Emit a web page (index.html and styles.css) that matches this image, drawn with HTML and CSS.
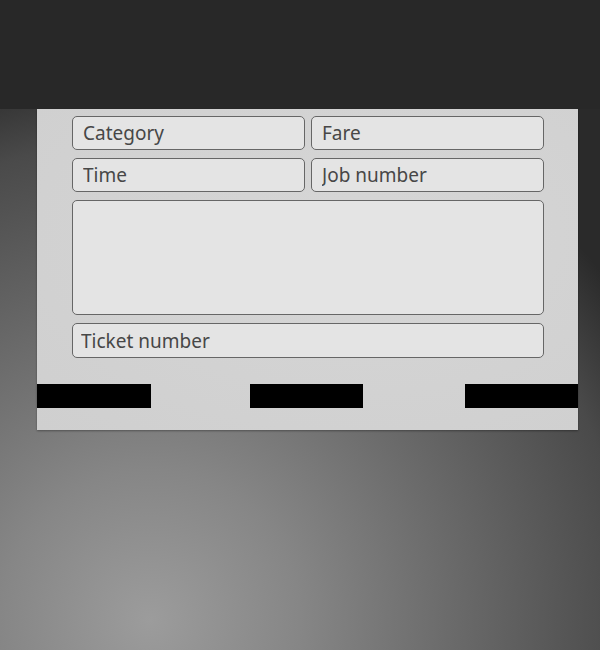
FILE: index.html
```html
<!doctype html>
<html lang="en">
  <head>
    <meta charset="UTF-8" />
    <meta name="viewport" content="width=device-width, initial-scale=1.0" />
    <title>Ticket</title>
    <link rel="stylesheet" href="styles.css">
  </head>
  <body>
    <div class="topbar"></div>

    <div class="panel">
      <div class="fields">
        <input class="field" type="text" placeholder="Category">
        <input class="field" type="text" placeholder="Fare">
        <input class="field" type="text" placeholder="Time">
        <input class="field" type="text" placeholder="Job number">
        <textarea class="field notes"></textarea>
        <input class="field wide" type="text" placeholder="Ticket number">
      </div>

      <div class="button-row">
        <button class="block-button first"></button>
        <button class="block-button middle"></button>
        <button class="block-button last"></button>
      </div>
    </div>
  </body>
</html>
```

FILE: styles.css
```css
html,
body {
  height: 100%;
}
body {
  margin: 0;
  font-family: "Noto Sans", "Open Sans", sans-serif;
  background-color: #2a2a2a;
  background-image: radial-gradient(circle at 150px 620px, #9c9c9c 0, #868686 150px, #5e5e5e 370px, #4a4a4a 480px, #2a2a2a 570px);
  overflow: hidden;
}
.topbar {
  height: 109px;
  background-color: #282828;
}
.panel {
  width: 541px;
  margin-left: 37px;
  box-sizing: border-box;
  padding: 7px 0 22px;
  background-color: #d1d1d1;
  background-image: radial-gradient(ellipse at 60% 40%, #d6d6d6 0, #cfcfcf 100%);
  box-shadow: 0 1px 2px rgba(0, 0, 0, 0.35);
}
.fields {
  display: grid;
  grid-template-columns: 233px 233px;
  column-gap: 6px;
  row-gap: 8px;
  padding: 0 34px 0 35px;
}
.field {
  box-sizing: border-box;
  height: 34px;
  margin: 0;
  padding: 0 10px;
  font-family: inherit;
  font-size: 19px;
  color: #444;
  background-color: #e4e4e4;
  border: 1px solid #666;
  border-radius: 5px;
  outline: none;
}
.field::placeholder {
  color: #474747;
  opacity: 1;
}
.notes {
  grid-column: 1 / 3;
  height: 115px;
  resize: none;
}
.wide {
  grid-column: 1 / 3;
  height: 35px;
  padding-left: 8px;
}
.button-row {
  display: flex;
  margin-top: 26px;
}
.block-button {
  width: 113px;
  height: 24px;
  padding: 0;
  background-color: #000;
  border: none;
  border-radius: 0;
  cursor: pointer;
}
.first {
  width: 114px;
}
.middle {
  margin-left: 99px;
}
.last {
  margin-left: auto;
}
```
